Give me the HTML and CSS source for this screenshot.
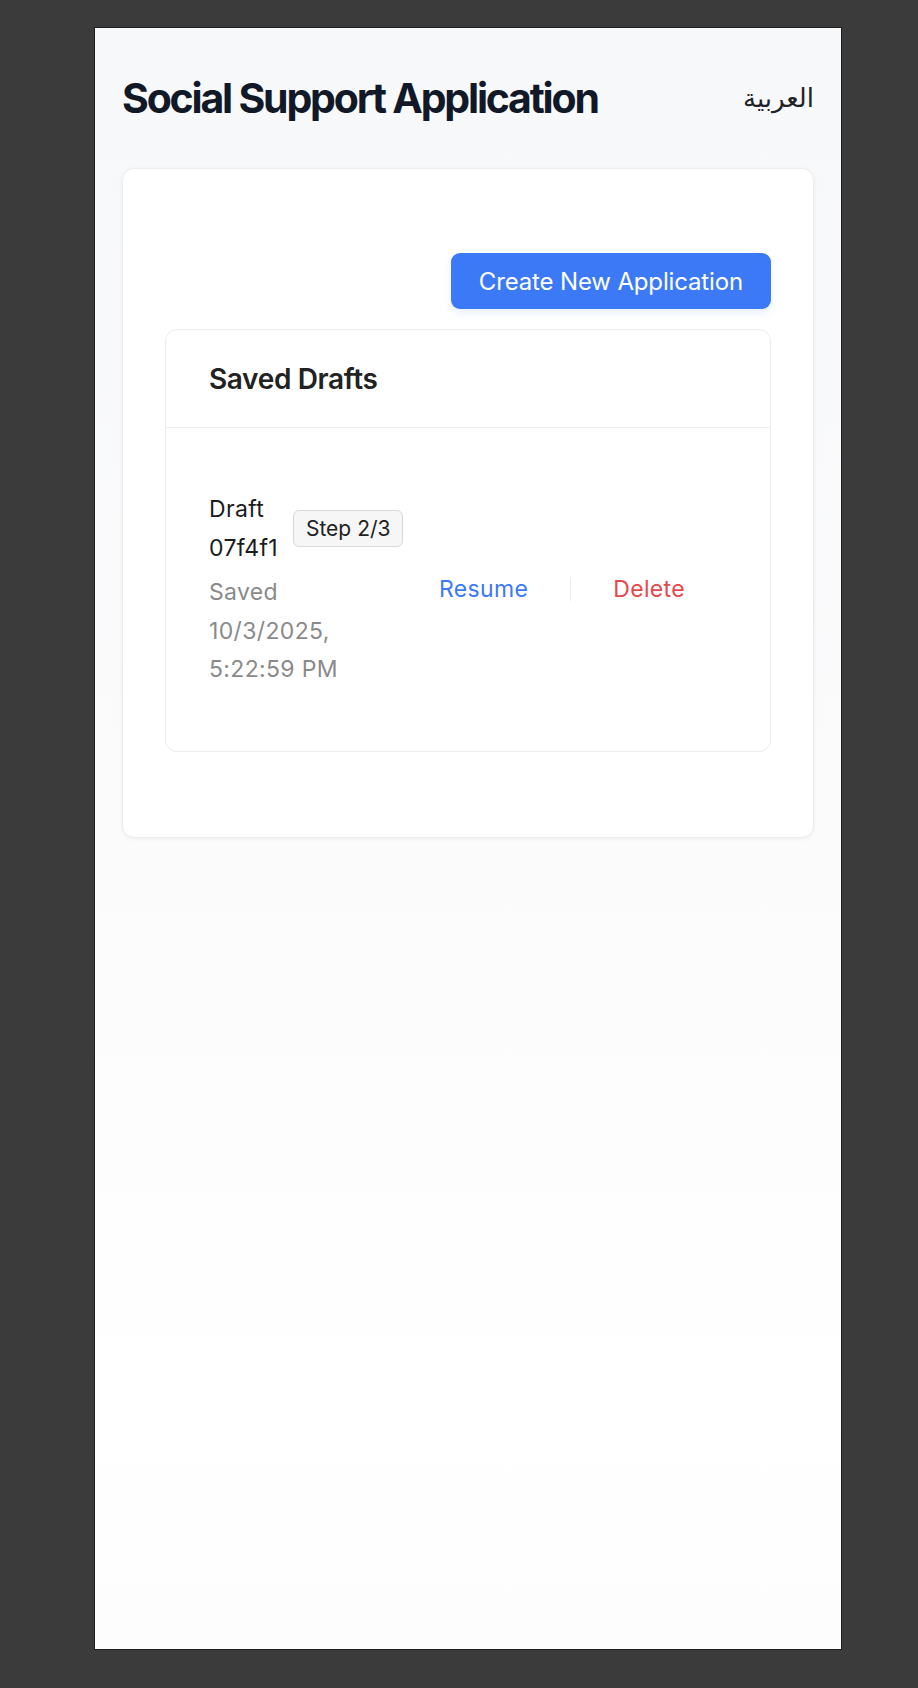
FILE: index.html
```html
<!DOCTYPE html>
<html lang="en">
<head>
<meta charset="utf-8">
<title>Social Support Application</title>
<link rel="stylesheet" href="styles.css">
</head>
<body>
<div class="page">
  <header class="app-header">
    <h1 class="app-title">Social Support Application</h1>
    <button class="lang-toggle" lang="ar">العربية</button>
  </header>
  <main class="card">
    <div class="card-actions">
      <button class="btn-primary">Create New Application</button>
    </div>
    <section class="drafts">
      <div class="drafts-header">
        <h2 class="drafts-title">Saved Drafts</h2>
      </div>
      <div class="draft-item">
        <div class="draft-info">
          <div class="draft-title-row">
            <span class="draft-name">Draft 07f4f1</span>
            <span class="step-badge">Step 2/3</span>
          </div>
          <div class="draft-saved">Saved 10/3/2025, 5:22:59 PM</div>
        </div>
        <div class="draft-actions">
          <button class="link-btn link-resume">Resume</button>
          <span class="action-divider"></span>
          <button class="link-btn link-delete">Delete</button>
        </div>
      </div>
    </section>
  </main>
</div>
</body>
</html>
```

FILE: styles.css
```css
* { box-sizing: border-box; }

html, body {
  margin: 0;
  padding: 0;
}

body {
  background: #3b3b3b;
  padding: 27px 76px 38px 94px;
  font-family: Inter, "Noto Sans", sans-serif;
}

.page {
  width: 748px;
  height: 1623px;
  border: 1px solid #1e1e1e;
  background: linear-gradient(180deg, #f7f8fa 0%, #fbfbfc 50%, #ffffff 85%, #fdfdfd 100%);
  padding: 46px 27px 0 27px;
}

.app-header {
  display: flex;
  align-items: center;
  justify-content: space-between;
  height: 48px;
  margin-bottom: 46px;
}

.app-title {
  margin: 0;
  font-size: 41px;
  line-height: 48px;
  font-weight: 700;
  letter-spacing: -2.2px;
  color: #111827;
}

.lang-toggle {
  border: 0;
  background: transparent;
  padding: 0;
  font-family: "DejaVu Sans", sans-serif;
  font-size: 26px;
  color: #1f2328;
  cursor: pointer;
}

.card {
  display: block;
  background: #ffffff;
  border: 1px solid #ececec;
  border-radius: 12px;
  box-shadow: 0 1px 4px rgba(0, 0, 0, 0.05);
  padding: 84px 42px 85px 42px;
}

.card-actions {
  display: flex;
  justify-content: flex-end;
  margin-bottom: 20px;
}

.btn-primary {
  height: 56px;
  padding: 0 28px;
  border: 0;
  border-radius: 9px;
  background: #3b79f6;
  color: #ffffff;
  font-family: Inter, sans-serif;
  font-size: 24px;
  letter-spacing: -0.15px;
  box-shadow: 0 4px 8px rgba(59, 121, 246, 0.12);
  cursor: pointer;
}

.drafts {
  border: 1px solid #ececec;
  border-radius: 12px;
  background: #ffffff;
}

.drafts-header {
  height: 98px;
  display: flex;
  align-items: center;
  padding: 0 43px;
  border-bottom: 1px solid #eeeeee;
}

.drafts-title {
  margin: 0;
  font-size: 28px;
  font-weight: 600;
  letter-spacing: -0.35px;
  color: #222222;
}

.draft-item {
  display: flex;
  align-items: center;
  justify-content: space-between;
  padding: 62px 43px 62px 43px;
}

.draft-info {
  width: 196px;
  font-size: 23px;
  line-height: 38.5px;
  letter-spacing: 0.35px;
}

.draft-title-row {
  display: flex;
  align-items: center;
  gap: 15px;
}

.draft-name {
  color: #1c1c1c;
}

.step-badge {
  flex: 0 0 auto;
  height: 37px;
  padding: 0 12px;
  border: 1px solid #d9d9d9;
  border-radius: 6px;
  background: #f6f6f6;
  font-size: 21px;
  line-height: 35px;
  letter-spacing: 0;
  color: #222222;
}

.draft-saved {
  margin-top: 6px;
  max-width: 150px;
  color: #8a8a8a;
}

.draft-actions {
  display: flex;
  align-items: center;
}

.link-btn {
  border: 0;
  background: transparent;
  padding: 0 42px;
  font-family: Inter, sans-serif;
  font-size: 23px;
  line-height: 38px;
  letter-spacing: 0.35px;
  cursor: pointer;
}

.link-resume { color: #3b79f6; }
.link-delete { color: #e5484d; }

.action-divider {
  width: 1px;
  height: 24px;
  background: #ececec;
}
```
